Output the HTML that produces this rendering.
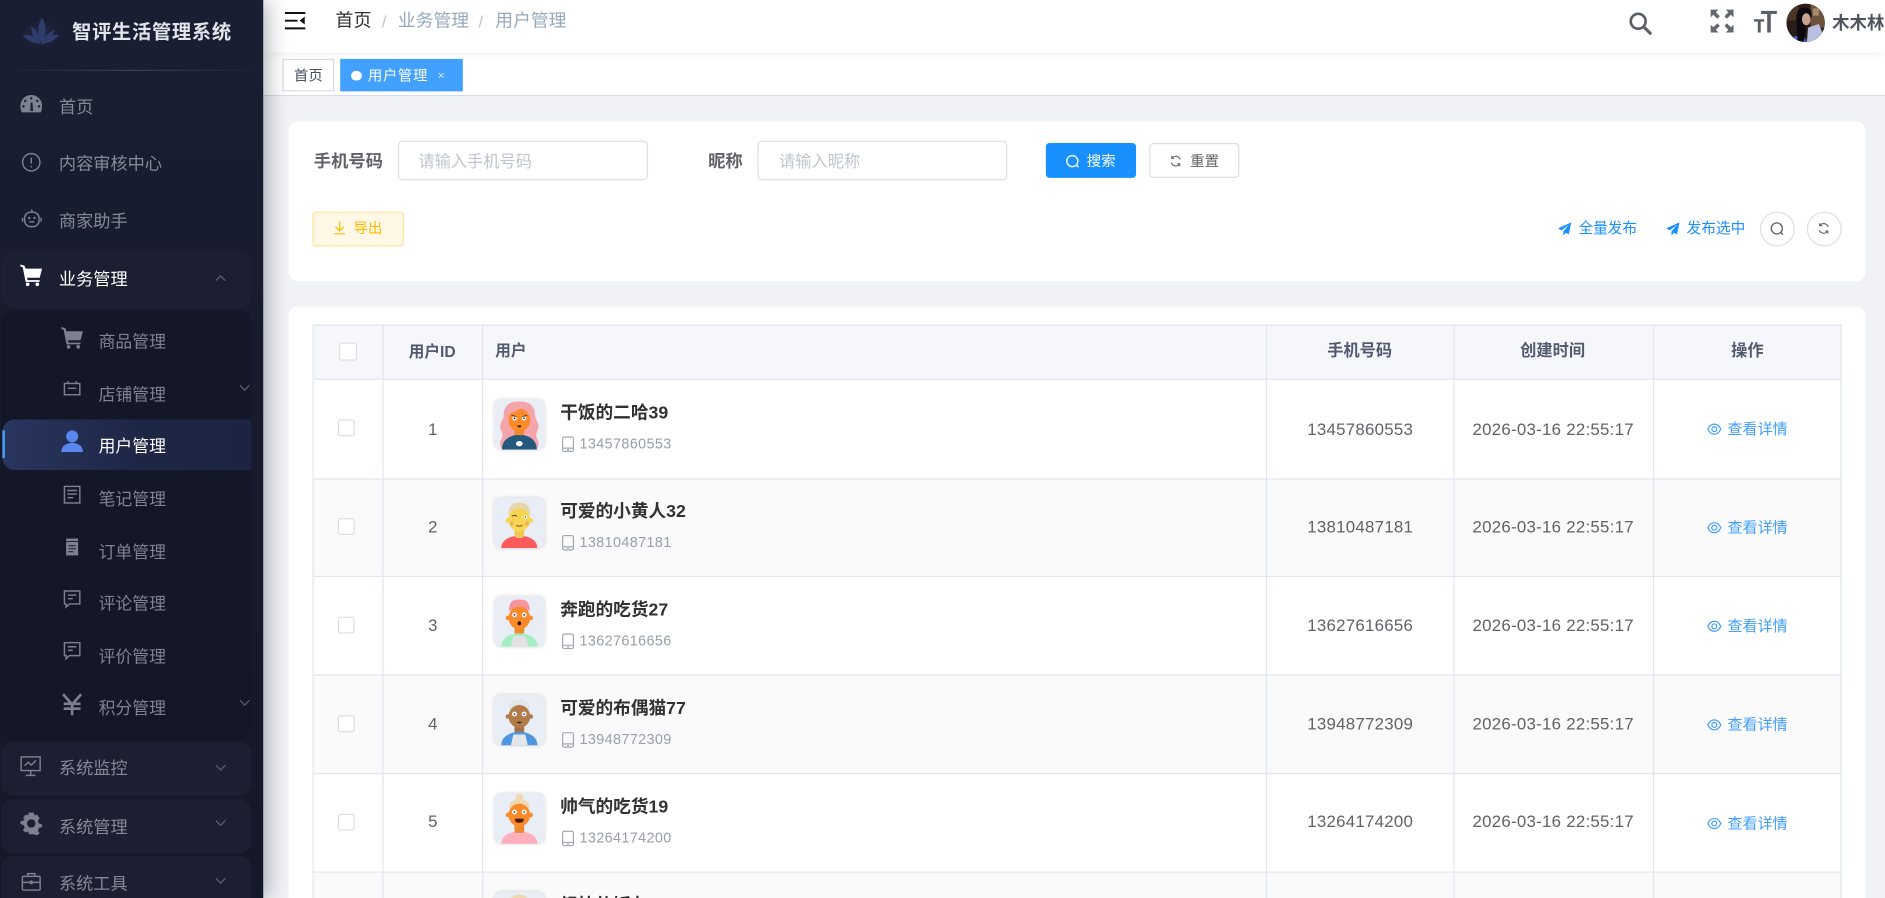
<!DOCTYPE html>
<html lang="zh-CN"><head><meta charset="utf-8"><title>用户管理</title>
<style>
*{box-sizing:border-box;margin:0;padding:0}
html,body{width:1885px;height:898px;overflow:hidden;background:#f0f2f6}
#app{position:absolute;left:0;top:0;width:1568px;height:747px;overflow:hidden;transform:scale(1.20217,1.20214);transform-origin:0 0;filter:blur(.3px);background:#f0f2f6;font-family:"Liberation Sans","Noto Sans CJK SC",sans-serif;font-size:14px;color:#606266}
#app div,#app svg{position:absolute}
#app svg{overflow:visible}
.t{position:absolute;white-space:nowrap;line-height:20px;height:20px}
.c{text-align:center}
.b{font-weight:700}
.d{letter-spacing:.22px}
.h{font-size:13.5px;font-weight:700;color:#515a6e}
#side{left:0;top:0;width:219px;height:747px;background:linear-gradient(180deg,#1a1e32 0,#171b2d 40%,#141828 100%);box-shadow:2px 0 18px rgba(0,21,41,.38);z-index:3}
.box{left:1px;width:208px;background:#1b1f31;border-radius:10px}
.m{color:#858a99;font-size:14.3px}
.s{color:#7e8392}
.ic{fill:#7c8190}
.st{fill:none;stroke:#7c8190;stroke-width:1.2}
.ch{fill:none;stroke:#5d6273;stroke-width:1}
.card{background:#fff;border-radius:8px;left:240px;width:1312px}
.inp{background:#fff;border:1px solid #dcdfe6;border-radius:4px;height:33px;width:208px;top:117px}
.ph{color:#c0c4cc;font-size:13.5px}
.hl{background:#e0e6ed}
.cb{width:14px;height:14px;background:#fff;border:1px solid #dcdfe6;border-radius:2px}
.av{left:411px;width:42px;height:42px;border-radius:6px;background:#e9edf5;box-shadow:0 0 3px rgba(0,0,0,.15);overflow:hidden}
.nm{left:466px;color:#303133;font-weight:700;font-size:14.7px}
.ph2{left:482px;font-size:12px;color:#999ea9;letter-spacing:.3px}
.blue{color:#409eff;font-size:12.5px}
.pub{color:#1890ff;font-size:12.2px}
</style></head><body>
<div id="app">

<!-- main top -->
<div style="left:219px;top:0;width:1349px;height:44px;background:#fff;box-shadow:0 2px 5px rgba(0,21,41,.05);z-index:1"></div>
<div style="left:219px;top:44px;width:1349px;height:36px;background:#fff;border-bottom:1px solid #d8dce5"></div>
<svg style="left:237px;top:10px;z-index:2" width="17" height="15" viewBox="0 0 17 15"><path d="M0 0h17v1.6H0zM0 6.4h10.5V8H0zM0 12.800h17v1.600H0z" fill="#111"/><path d="M16.500 3.800v6.600L12.200 7.200z" fill="#111"/></svg>
<div class="t" style="left:279px;top:8px;font-size:15px;color:#303133;z-index:2">首页</div>
<div class="t" style="left:317.500px;top:8px;font-size:14px;color:#c0c4cc;z-index:2">/</div>
<div class="t" style="left:331px;top:8px;font-size:14.800px;color:#97a8be;z-index:2">业务管理</div>
<div class="t" style="left:398px;top:8px;font-size:14px;color:#c0c4cc;z-index:2">/</div>
<div class="t" style="left:412px;top:8px;font-size:14.800px;color:#97a8be;z-index:2">用户管理</div>

<svg style="left:1355px;top:10px;z-index:2" width="19" height="19" viewBox="0 0 19 19"><circle cx="7.700" cy="7.700" r="6.200" fill="none" stroke="#5a5e66" stroke-width="2.200"/><path d="M12.300 12.300l5.400 5.400" stroke="#5a5e66" stroke-width="2.600" stroke-linecap="round"/></svg>
<svg style="left:1423px;top:8px;z-index:2" width="19" height="19" viewBox="0 0 19 19" fill="#636770"><path d="M0 0h6.500L4.300 2.200 7.600 5.500 5.500 7.600 2.200 4.300 0 6.500zM19 0v6.500l-2.200-2.200-3.300 3.300-2.100-2.100 3.300-3.300L12.500 0zM0 19v-6.500l2.200 2.200 3.300-3.300 2.100 2.100-3.300 3.300L6.500 19zM19 19h-6.500l2.200-2.200-3.300-3.300 2.100-2.100 3.300 3.300 2.200-2.200z"/></svg>
<svg style="left:1459px;top:8px;z-index:2" width="19" height="19" viewBox="0 0 19 19" fill="#5a5e66"><path d="M6 1h13v2.600h-5V19h-3V3.600H6zM0 8h8.500v2H5.600v9H3.200v-9H0z"/></svg>
<svg style="left:1486px;top:3px;z-index:2" width="32" height="32" viewBox="0 0 32 32"><defs><clipPath id="ca"><circle cx="16" cy="16" r="16"/></clipPath></defs><g clip-path="url(#ca)"><rect width="32" height="32" fill="#2a1d18"/><rect x="20" width="12" height="20" fill="#6d5240"/><rect x="22" y="4" width="5" height="6" fill="#a88a6c"/><rect x="0" y="0" width="10" height="14" fill="#4a3526"/><path d="M17 32l1-12 9-3 6 15z" fill="#b9bfe0"/><path d="M3 32l4-5 8 0 2 5z" fill="#5560c8"/><path d="M10 5c5-3 11-2 11 4 0 3-1 5-2 7h-3c0 6 0 12-2 16H9c1-9-3-20 1-27z" fill="#0b0a10"/><ellipse cx="16.500" cy="13" rx="3.600" ry="5" fill="#c9a391"/></g></svg>
<div class="t b" style="left:1524px;top:10px;font-size:14.500px;color:#50545e;z-index:2">木木林</div>

<!-- tabs -->
<div class="t c" style="left:235px;top:49px;width:43px;height:27px;line-height:26px;border:1px solid #d8dce5;background:#fff;font-size:12px;color:#495060">首页</div>
<div style="left:283px;top:49px;width:102px;height:27px;background:#42a0ff"></div>
<div style="left:292px;top:58.500px;width:8.500px;height:8.500px;border-radius:50%;background:#fff"></div>
<div class="t" style="left:306px;top:53px;font-size:12px;color:#fff;letter-spacing:.5px">用户管理</div>
<div class="t" style="left:364px;top:54px;font-size:10px;color:#dcebff">×</div>

<!-- search card -->
<div class="card" style="top:101px;height:133px"></div>
<div class="t b" style="left:261px;top:125px;font-size:14.400px">手机号码</div>
<div class="inp" style="left:331px"></div>
<div class="t ph" style="left:348px;top:124.500px">请输入手机号码</div>
<div class="t b" style="left:589px;top:125px;font-size:14.400px">昵称</div>
<div class="inp" style="left:630px"></div>
<div class="t ph" style="left:648px;top:124.500px">请输入昵称</div>
<div style="left:870px;top:119px;width:75px;height:29px;background:#1890ff;border-radius:3px"></div>
<svg style="left:886px;top:127.500px" width="13" height="13" viewBox="0 0 13 13" fill="none" stroke="#fff" stroke-width="1.100"><circle cx="6" cy="6" r="4.600"/><path d="M9.400 9.400l1.800 1.800"/></svg>
<div class="t" style="left:904px;top:124px;font-size:12px;color:#fff">搜索</div>
<div style="left:956px;top:119px;width:75px;height:29px;background:#fff;border:1px solid #dcdfe6;border-radius:3px"></div>
<svg style="left:973px;top:128.500px" width="10" height="10" viewBox="0 0 12 12" fill="none" stroke="#606266" stroke-width="1.100"><path d="M10.500 4.500A4.700 4.700 0 0 0 2.300 3M1.500 7.500a4.700 4.700 0 0 0 8.200 1.500"/><path d="M2 .8v2.500h2.500M10 11.200V8.700H7.500"/></svg>
<div class="t" style="left:990px;top:124px;font-size:12px;color:#606266">重置</div>
<div style="left:260px;top:176px;width:76px;height:29px;background:#fff8e6;border:1px solid #ffe399;border-radius:3px"></div>
<svg style="left:277px;top:184px" width="11" height="12" viewBox="0 0 11 12" fill="none" stroke="#ffba00" stroke-width="1"><path d="M5.500 0v7.600M2 4.600l3.500 3.400L9 4.600M1 10.500h9"/></svg>
<div class="t" style="left:294px;top:180px;font-size:12px;color:#ffba00">导出</div>
<svg style="left:1296px;top:185px" width="11" height="11" viewBox="0 0 11 11" fill="#1890ff"><path d="M11 0L0 5l3 1.600L9 2 4.400 7.600V11l2-2.400L9 10z"/></svg>
<div class="t pub" style="left:1313px;top:180px">全量发布</div>
<svg style="left:1386px;top:185px" width="11" height="11" viewBox="0 0 11 11" fill="#1890ff"><path d="M11 0L0 5l3 1.600L9 2 4.400 7.600V11l2-2.400L9 10z"/></svg>
<div class="t pub" style="left:1403px;top:180px">发布选中</div>
<div style="left:1464px;top:176px;width:29px;height:29px;border:1px solid #dcdfe6;border-radius:50%;background:#fff"></div>
<svg style="left:1472px;top:184px" width="13" height="13" viewBox="0 0 13 13" fill="none" stroke="#606266" stroke-width="1.100"><circle cx="6" cy="6" r="4.600"/><path d="M9.400 9.400l1.800 1.800"/></svg>
<div style="left:1503px;top:176px;width:29px;height:29px;border:1px solid #dcdfe6;border-radius:50%;background:#fff"></div>
<svg style="left:1512px;top:185px" width="10" height="10" viewBox="0 0 12 12" fill="none" stroke="#606266" stroke-width="1.100"><path d="M10.500 4.500A4.700 4.700 0 0 0 2.300 3M1.500 7.500a4.700 4.700 0 0 0 8.200 1.500"/><path d="M2 .8v2.500h2.500M10 11.200V8.700H7.500"/></svg>

<!-- table card -->
<div class="card" style="top:255px;height:500px"></div>
<div style="left:260px;top:270px;width:1272px;height:46px;background:#f5f7fb"></div>
<div style="left:260px;top:398px;width:1272px;height:82px;background:#fafafa"></div>
<div style="left:260px;top:562px;width:1272px;height:82px;background:#fafafa"></div>
<div style="left:260px;top:726px;width:1272px;height:30px;background:#fafafa"></div>
<div class="hl" style="left:260px;top:270px;width:1272px;height:1px"></div>
<div class="hl" style="left:260px;top:315px;width:1272px;height:1px"></div>
<div class="hl" style="left:260px;top:397.500px;width:1272px;height:1px"></div>
<div class="hl" style="left:260px;top:479px;width:1272px;height:1px"></div>
<div class="hl" style="left:260px;top:561px;width:1272px;height:1px"></div>
<div class="hl" style="left:260px;top:643px;width:1272px;height:1px"></div>
<div class="hl" style="left:260px;top:725px;width:1272px;height:1px"></div>
<div class="hl" style="left:260px;top:270px;width:1px;height:480px"></div>
<div class="hl" style="left:318px;top:270px;width:1px;height:480px"></div>
<div class="hl" style="left:401px;top:270px;width:1px;height:480px"></div>
<div class="hl" style="left:1053px;top:270px;width:1px;height:480px"></div>
<div class="hl" style="left:1209px;top:270px;width:1px;height:480px"></div>
<div class="hl" style="left:1375px;top:270px;width:1px;height:480px"></div>
<div class="hl" style="left:1531px;top:270px;width:1px;height:480px"></div>

<div class="cb" style="left:282px;top:285px;width:15px;height:15px"></div>
<div class="t c h" style="left:318px;top:283px;width:83px;font-size:13px">用户ID</div>
<div class="t h" style="left:412px;top:282px;font-size:13px">用户</div>
<div class="t c h" style="left:1053.500px;top:282px;width:155px">手机号码</div>
<div class="t c h" style="left:1209px;top:282px;width:165px">创建时间</div>
<div class="t c h" style="left:1376px;top:282px;width:155px">操作</div>

<!-- row 1 -->
<div class="cb" style="left:281px;top:349px"></div>
<div class="t c" style="left:319px;top:347px;width:82px">1</div>
<div class="av" style="top:332px"><svg width="42" height="42" viewBox="0 0 42 42"><path d="M21 2c-9 0-13 4-13 11 0 4-3 6-3 10 0 3 2 4 2 7s-2 4-2 7c0 2 1 4 2 5h28c1-1 2-3 2-5 0-3-2-4-2-7s2-4 2-7c0-4-3-6-3-10 0-7-4-11-13-11z" fill="#f4a5aa"/><rect x="17" y="24" width="8" height="8" fill="#f08a30"/><path d="M6.500 42c0-8 6-11 11-12h7c5 1 11 4 11 12z" fill="#23587f"/><ellipse cx="21" cy="17.500" rx="9" ry="9.500" fill="#fb8a2b"/><path d="M12 12c5-1 9-3 11-6 2 3 5 5 7 6-1-5-4-8-9-8s-8 3-9 8z" fill="#f4a5aa"/><circle cx="17" cy="16" r="1.800" fill="#fff"/><circle cx="25" cy="16" r="1.800" fill="#fff"/><circle cx="17" cy="16" r=".7" fill="#222"/><circle cx="25" cy="16" r=".7" fill="#222"/><path d="M14.500 13.500l4 1M27.500 13.500l-4 1" stroke="#5a2c12" stroke-width=".8"/><path d="M19.300 22h3.400l-.7 1.400h-2z" fill="#2a1408"/><ellipse cx="21" cy="37" rx="2.800" ry="2.200" fill="#fff"/></svg></div>
<div class="t nm" style="top:334px">干饭的二哈39</div>
<svg style="left:467px;top:363px" width="11" height="13" viewBox="0 0 11 13" fill="none" stroke="#a3a7b2" stroke-width="1"><rect x="1" y=".5" width="9" height="12" rx="1.500"/><path d="M1 9.800h9M4.500 11.200h2"/></svg>
<div class="t ph2" style="top:359px">13457860553</div>
<div class="t c d" style="left:1054px;top:347px;width:155px">13457860553</div>
<div class="t c d" style="left:1209.500px;top:347px;width:165px">2026-03-16 22:55:17</div>
<svg style="left:1420px;top:351.500px" width="12" height="10" viewBox="0 0 12 10" fill="none" stroke="#409eff" stroke-width="1"><path d="M.6 5C2 2 4 .8 6 .8S10 2 11.400 5C10 8 8 9.200 6 9.200S2 8 .6 5z"/><circle cx="6" cy="5" r="2"/></svg>
<div class="t blue" style="left:1437px;top:347px">查看详情</div>

<!-- row 2 -->
<div class="cb" style="left:281px;top:431px"></div>
<div class="t c" style="left:319px;top:428px;width:82px">2</div>
<div class="av" style="top:414px"><svg width="42" height="42" viewBox="0 0 42 42"><path d="M12 14c0-8 4-10 9-10s9 2 9 10z" fill="#e6d6ac"/><rect x="17" y="24" width="8" height="9" fill="#efc94f"/><path d="M6 42c0-6 5-9 11-10 1 2 7 2 8 0 6 1 11 4 11 10z" fill="#fa5c5c"/><ellipse cx="21" cy="18.500" rx="9" ry="9.500" fill="#f7d552"/><circle cx="11.500" cy="19" r="2" fill="#f7d552"/><circle cx="30.500" cy="19" r="2" fill="#f7d552"/><path d="M15 15.500c1-1 3-1 4 0" stroke="#5a4a1a" stroke-width=".8" fill="none"/><circle cx="26" cy="16" r="1.500" fill="#fff"/><circle cx="26" cy="16" r=".6" fill="#222"/><circle cx="14.500" cy="21.500" r="1.800" fill="#f2b25c"/><circle cx="27.500" cy="21.500" r="1.800" fill="#f2b25c"/><path d="M18.500 23c1 .8 4 .8 5 0" stroke="#5a4a1a" stroke-width=".8" fill="none"/></svg></div>
<div class="t nm" style="top:416px">可爱的小黄人32</div>
<svg style="left:467px;top:445px" width="11" height="13" viewBox="0 0 11 13" fill="none" stroke="#a3a7b2" stroke-width="1"><rect x="1" y=".5" width="9" height="12" rx="1.500"/><path d="M1 9.800h9M4.500 11.200h2"/></svg>
<div class="t ph2" style="top:441px">13810487181</div>
<div class="t c d" style="left:1054px;top:428px;width:155px">13810487181</div>
<div class="t c d" style="left:1209.500px;top:428px;width:165px">2026-03-16 22:55:17</div>
<svg style="left:1420px;top:433.500px" width="12" height="10" viewBox="0 0 12 10" fill="none" stroke="#409eff" stroke-width="1"><path d="M.6 5C2 2 4 .8 6 .8S10 2 11.400 5C10 8 8 9.200 6 9.200S2 8 .6 5z"/><circle cx="6" cy="5" r="2"/></svg>
<div class="t blue" style="left:1437px;top:429px">查看详情</div>

<!-- row 3 -->
<div class="cb" style="left:281px;top:513px"></div>
<div class="t c" style="left:319px;top:509.500px;width:82px">3</div>
<div class="av" style="top:496px"><svg width="42" height="42" viewBox="0 0 42 42"><path d="M12.500 12C12 5 16 2 21 3c5-1 9 2 8.500 9z" fill="#f4949c"/><rect x="17" y="24" width="8" height="9" fill="#f08a30"/><path d="M6 42c0-6 4-9 11-11h8c7 2 11 5 11 11z" fill="#a4eec0"/><path d="M16 33h10l3 9H14z" fill="#e2e2e4"/><ellipse cx="21" cy="18" rx="9" ry="9.500" fill="#fb8a2b"/><circle cx="11.500" cy="18" r="1.900" fill="#fb8a2b"/><circle cx="30.500" cy="18" r="1.900" fill="#fb8a2b"/><circle cx="17" cy="15.500" r="2" fill="#fff"/><circle cx="25" cy="15.500" r="2" fill="#fff"/><circle cx="17" cy="15.500" r=".7" fill="#222"/><circle cx="25" cy="15.500" r=".7" fill="#222"/><ellipse cx="21" cy="22.500" rx="1.500" ry="1.700" fill="#2a1408"/></svg></div>
<div class="t nm" style="top:498px">奔跑的吃货27</div>
<svg style="left:467px;top:527px" width="11" height="13" viewBox="0 0 11 13" fill="none" stroke="#a3a7b2" stroke-width="1"><rect x="1" y=".5" width="9" height="12" rx="1.500"/><path d="M1 9.800h9M4.500 11.200h2"/></svg>
<div class="t ph2" style="top:523px">13627616656</div>
<div class="t c d" style="left:1054px;top:509.500px;width:155px">13627616656</div>
<div class="t c d" style="left:1209.500px;top:509.500px;width:165px">2026-03-16 22:55:17</div>
<svg style="left:1420px;top:515.500px" width="12" height="10" viewBox="0 0 12 10" fill="none" stroke="#409eff" stroke-width="1"><path d="M.6 5C2 2 4 .8 6 .8S10 2 11.400 5C10 8 8 9.200 6 9.200S2 8 .6 5z"/><circle cx="6" cy="5" r="2"/></svg>
<div class="t blue" style="left:1437px;top:511px">查看详情</div>

<!-- row 4 -->
<div class="cb" style="left:281px;top:595px"></div>
<div class="t c" style="left:319px;top:591.500px;width:82px">4</div>
<div class="av" style="top:578px"><svg width="42" height="42" viewBox="0 0 42 42"><path d="M12.500 13C12 6 16 4 21 4s9 2 8.500 9z" fill="#e5e5e8"/><rect x="17" y="24" width="8" height="9" fill="#a3724a"/><path d="M6 42c0-6 4-9 11-11h8c7 2 11 5 11 11z" fill="#4e97e0"/><path d="M16 33h10l2 9H14z" fill="#e4e6ea"/><ellipse cx="21" cy="18" rx="9" ry="9.500" fill="#b27b4a"/><circle cx="11.500" cy="18" r="1.900" fill="#b27b4a"/><circle cx="30.500" cy="18" r="1.900" fill="#b27b4a"/><circle cx="17" cy="16" r="2" fill="#fff"/><circle cx="25" cy="16" r="2" fill="#fff"/><circle cx="17" cy="16" r=".7" fill="#222"/><circle cx="25" cy="16" r=".7" fill="#222"/><path d="M19 22.500h4c0 1.500-4 1.500-4 0z" fill="#2a1408"/></svg></div>
<div class="t nm" style="top:580px">可爱的布偶猫77</div>
<svg style="left:467px;top:609px" width="11" height="13" viewBox="0 0 11 13" fill="none" stroke="#a3a7b2" stroke-width="1"><rect x="1" y=".5" width="9" height="12" rx="1.500"/><path d="M1 9.800h9M4.500 11.200h2"/></svg>
<div class="t ph2" style="top:605px">13948772309</div>
<div class="t c d" style="left:1054px;top:592px;width:155px">13948772309</div>
<div class="t c d" style="left:1209.500px;top:592px;width:165px">2026-03-16 22:55:17</div>
<svg style="left:1420px;top:597.500px" width="12" height="10" viewBox="0 0 12 10" fill="none" stroke="#409eff" stroke-width="1"><path d="M.6 5C2 2 4 .8 6 .8S10 2 11.400 5C10 8 8 9.200 6 9.200S2 8 .6 5z"/><circle cx="6" cy="5" r="2"/></svg>
<div class="t blue" style="left:1437px;top:593px">查看详情</div>

<!-- row 5 -->
<div class="cb" style="left:281px;top:677px"></div>
<div class="t c" style="left:319px;top:673px;width:82px">5</div>
<div class="av" style="top:660px"><svg width="42" height="42" viewBox="0 0 42 42"><circle cx="21" cy="3.500" r="3.300" fill="#eed9b2"/><path d="M12.500 13C12 7 16 5 21 5s9 2 8.500 8z" fill="#eed9b2"/><rect x="17" y="24" width="8" height="9" fill="#f08a30"/><path d="M6 42c0-6 5-9 11-10 1 2 7 2 8 0 6 1 11 4 11 10z" fill="#ffaebb"/><ellipse cx="21" cy="18" rx="9" ry="9.500" fill="#fb8a2b"/><circle cx="11.500" cy="18" r="1.900" fill="#fb8a2b"/><circle cx="30.500" cy="18" r="1.900" fill="#fb8a2b"/><circle cx="17" cy="15.500" r="2" fill="#fff"/><circle cx="25" cy="15.500" r="2" fill="#fff"/><circle cx="17" cy="15.500" r=".7" fill="#222"/><circle cx="25" cy="15.500" r=".7" fill="#222"/><path d="M17.500 21h7v1.500c0 2.500-7 2.500-7 0z" fill="#4a1d10"/></svg></div>
<div class="t nm" style="top:662px">帅气的吃货19</div>
<svg style="left:467px;top:691px" width="11" height="13" viewBox="0 0 11 13" fill="none" stroke="#a3a7b2" stroke-width="1"><rect x="1" y=".5" width="9" height="12" rx="1.500"/><path d="M1 9.800h9M4.500 11.200h2"/></svg>
<div class="t ph2" style="top:687px">13264174200</div>
<div class="t c d" style="left:1054px;top:673px;width:155px">13264174200</div>
<div class="t c d" style="left:1209.500px;top:673px;width:165px">2026-03-16 22:55:17</div>
<svg style="left:1420px;top:679.500px" width="12" height="10" viewBox="0 0 12 10" fill="none" stroke="#409eff" stroke-width="1"><path d="M.6 5C2 2 4 .8 6 .8S10 2 11.400 5C10 8 8 9.200 6 9.200S2 8 .6 5z"/><circle cx="6" cy="5" r="2"/></svg>
<div class="t blue" style="left:1437px;top:675px">查看详情</div>

<!-- row 6 partial -->
<div class="av" style="top:742px"><svg width="42" height="42" viewBox="0 0 42 42"><path d="M12 13C12 5 16 2 21 2s9 3 9 11z" fill="#eed9b2"/></svg></div>
<div class="t nm" style="top:744px">轻快的饭友</div>

<!-- sidebar -->
<div id="side">
  <svg style="left:18px;top:14px" width="32" height="24" viewBox="0 0 34 27"><defs><radialGradient id="gl"><stop offset="0" stop-color="#2b3966" stop-opacity=".4"/><stop offset="1" stop-color="#2b3966" stop-opacity="0"/></radialGradient></defs><ellipse cx="17" cy="16" rx="19" ry="14" fill="url(#gl)"/><g fill="#2f3d6c"><path d="M18 26C14 20 13 8 18 1c5 7 4 17 0 25z"/><path d="M16 26C11 23 8 16 8 9c5 3 9 10 8 17z"/><path d="M18 26c6-3 10-8 12-14-6 3-11 7-12 14z"/><path d="M16 25C10 25 4 22 0 17c6-1 13 2 16 8z"/><path d="M18 25c6 0 12-3 16-8-6-1-13 2-16 8z"/></g></svg>
  <div class="t b" style="left:60px;top:18px;font-size:16px;color:#e3e5ec;letter-spacing:.6px">智评生活管理系统</div>
  <div style="left:0;top:58px;width:219px;height:1px;background:linear-gradient(90deg,rgba(255,255,255,0),rgba(255,255,255,.16) 50%,rgba(255,255,255,0))"></div>

  <div class="box" style="top:65px;height:47px;background:#1a1e31"></div>
  <svg style="left:17px;top:79px" width="18" height="15" viewBox="0 0 18 15"><path class="ic" d="M9 0C4 0 0 4 0 9c0 2 .3 4 1 5.500h16c.7-1.500 1-3.500 1-5.500 0-5-4-9-9-9z"/><g fill="#1a1e31"><path d="M8.500 6.500l1.500-.3.500 7h-2.300z"/><circle cx="4" cy="5" r="1"/><circle cx="9" cy="2.800" r="1"/><circle cx="14" cy="5" r="1"/><circle cx="2.500" cy="9.500" r="1"/><circle cx="15.500" cy="9.500" r="1"/></g></svg>
  <div class="t m" style="left:49px;top:80px">首页</div>
  <svg style="left:18px;top:127px" width="16" height="16" viewBox="0 0 16 16"><circle class="st" cx="8" cy="8" r="7.200"/><path d="M8 4v5M8 11v1.200" class="st"/></svg>
  <div class="t m" style="left:49px;top:127px">内容审核中心</div>
  <svg style="left:18px;top:173px" width="17" height="17" viewBox="0 0 17 17"><rect class="st" x="2.500" y="3.500" width="12" height="12" rx="5"/><path class="st" d="M8.500 3.500V1.200M.8 8v3.500M16.200 8v3.500"/><circle class="ic" cx="6.300" cy="8.300" r="1"/><circle class="ic" cx="10.700" cy="8.300" r="1"/><path class="st" d="M6.500 11.500h4"/></svg>
  <div class="t m" style="left:49px;top:175px">商家助手</div>

  <div class="box" style="top:208px;height:48px"></div>
  <svg style="left:17px;top:220px" width="18" height="18" viewBox="0 0 18 18"><path fill="#fff" d="M0 0l3.300 1 1 2.500H18l-2 7.500H5.500L6 13h10v1.500H4.300L3.600 11 1.900 2.200 0 1.600z"/><circle fill="#fff" cx="6" cy="16.500" r="1.500"/><circle fill="#fff" cx="14" cy="16.500" r="1.500"/></svg>
  <div class="t" style="left:49px;top:223px;color:#fff;font-size:14.300px">业务管理</div>
  <svg style="left:179px;top:229px" width="9" height="5" viewBox="0 0 9 5"><path class="ch" d="M.5 4.500l4-4 4 4"/></svg>

  <div style="left:1px;top:258px;width:208px;height:357px;background:#131728;border-radius:10px"></div>
  <svg style="left:51px;top:272px" width="18" height="18" viewBox="0 0 18 18"><path class="ic" d="M0 0l3.300 1 1 2.500H18l-2 7.500H5.500L6 13h10v1.500H4.300L3.600 11 1.900 2.200 0 1.600z"/><circle class="ic" cx="6" cy="16.500" r="1.500"/><circle class="ic" cx="14" cy="16.500" r="1.500"/></svg>
  <div class="t s" style="left:82px;top:274px">商品管理</div>
  <svg style="left:53px;top:317px" width="14" height="12" viewBox="0 0 14 12"><rect class="st" x=".6" y="2" width="12.800" height="9.400"/><path class="st" d="M3.500 0v2M10.500 0v2M3.500 6h7"/></svg>
  <div class="t s" style="left:82px;top:317.500px">店铺管理</div>
  <svg style="left:199px;top:320px" width="9" height="5" viewBox="0 0 9 5"><path class="ch" d="M.5.500l4 4 4-4"/></svg>

  <div style="left:2px;top:349px;width:207px;height:42px;background:linear-gradient(90deg,#29365f,#1e2646 55%,#1d2443);border-radius:10px 0 0 10px"></div>
  <div style="left:2px;top:358px;width:2px;height:23px;background:#4ea1ff"></div>
  <svg style="left:51px;top:358px" width="18" height="18" viewBox="0 0 18 18" fill="#5b86f0"><circle cx="9" cy="5" r="5"/><path d="M0 18c0-5 4-7.500 9-7.500s9 2.500 9 7.500z"/></svg>
  <div class="t" style="left:82px;top:361px;color:#fff">用户管理</div>

  <svg style="left:53px;top:404px" width="14" height="15" viewBox="0 0 14 15"><rect class="st" x=".6" y=".6" width="12.800" height="13.800"/><path class="st" d="M3 4h8M3 7h8M3 10h5"/></svg>
  <div class="t s" style="left:82px;top:405px">笔记管理</div>
  <svg style="left:55px;top:448px" width="10" height="14" viewBox="0 0 10 14"><rect class="ic" width="10" height="14"/><path stroke="#131728" stroke-width=".8" d="M0 2.500h10M2 6h6M2 8.500h6M2 11h4"/></svg>
  <div class="t s" style="left:82px;top:449px">订单管理</div>
  <svg style="left:53px;top:491px" width="14" height="15" viewBox="0 0 14 15"><path class="st" d="M.6.600h12.800v10.800H4.800L2 14v-2.600H.6z"/><path class="st" d="M3.500 4h7M3.500 7h4"/></svg>
  <div class="t s" style="left:82px;top:492px">评论管理</div>
  <svg style="left:53px;top:534px" width="14" height="15" viewBox="0 0 14 15"><path class="st" d="M.6.600h12.800v10.800H4.800L2 14v-2.600H.6z"/><path class="st" d="M3.500 4h7M3.500 7h4"/></svg>
  <div class="t s" style="left:82px;top:536px">评价管理</div>
  <svg style="left:51px;top:577px" width="18" height="18" viewBox="0 0 18 18"><path fill="none" stroke="#7c8190" stroke-width="2.200" d="M1.500 .5L9 9 16.500 .5M9 9v9M2 8.500h14M2 12.500h14"/></svg>
  <div class="t s" style="left:82px;top:579px">积分管理</div>
  <svg style="left:199px;top:582px" width="9" height="5" viewBox="0 0 9 5"><path class="ch" d="M.5.500l4 4 4-4"/></svg>

  <div class="box" style="top:617px;height:45px"></div>
  <svg style="left:17px;top:629px" width="17" height="17" viewBox="0 0 17 17"><rect class="st" x=".6" y=".6" width="15.800" height="11.400"/><path class="st" d="M3.500 8l3-3 2.500 2.500 4-4M8.500 12v4M4.500 16h8"/></svg>
  <div class="t m" style="left:49px;top:630px">系统监控</div>
  <svg style="left:179px;top:636px" width="9" height="5" viewBox="0 0 9 5"><path class="ch" d="M.5.500l4 4 4-4"/></svg>

  <div class="box" style="top:665px;height:45px"></div>
  <svg style="left:17px;top:676px" width="18" height="18" viewBox="0 0 18 18"><path class="ic" fill-rule="evenodd" d="M7 0h4l.6 2.300 2.200-.7 2.200 3.100-1.500 1.900.9 2.400 2.600.9v2l-2.600.9-.9 2.400 1.500 1.900-2.200 1.800-2.200-.7L11 18H7l-.6-2.300-2.200.7L2 14.600l1.500-1.900-.9-2.400L0 9.400v-2l2.600-.9.9-1.900L2 4.700l2.200-3.100 2.200.7zM9 5.500a3.500 3.500 0 1 0 0 7 3.500 3.500 0 0 0 0-7z"/></svg>
  <div class="t m" style="left:49px;top:679px">系统管理</div>
  <svg style="left:179px;top:682px" width="9" height="5" viewBox="0 0 9 5"><path class="ch" d="M.5.500l4 4 4-4"/></svg>

  <div class="box" style="top:712px;height:45px"></div>
  <svg style="left:18px;top:726px" width="16" height="15" viewBox="0 0 16 15"><rect class="st" x=".6" y="3" width="14.800" height="11.400" rx="1"/><path class="st" d="M5 3V.7h6V3M.6 8h14.800"/><rect class="ic" x="6.800" y="6.500" width="2.400" height="3"/></svg>
  <div class="t m" style="left:49px;top:726px">系统工具</div>
  <svg style="left:179px;top:730px" width="9" height="5" viewBox="0 0 9 5"><path class="ch" d="M.5.500l4 4 4-4"/></svg>
</div>
</div>
</body></html>
